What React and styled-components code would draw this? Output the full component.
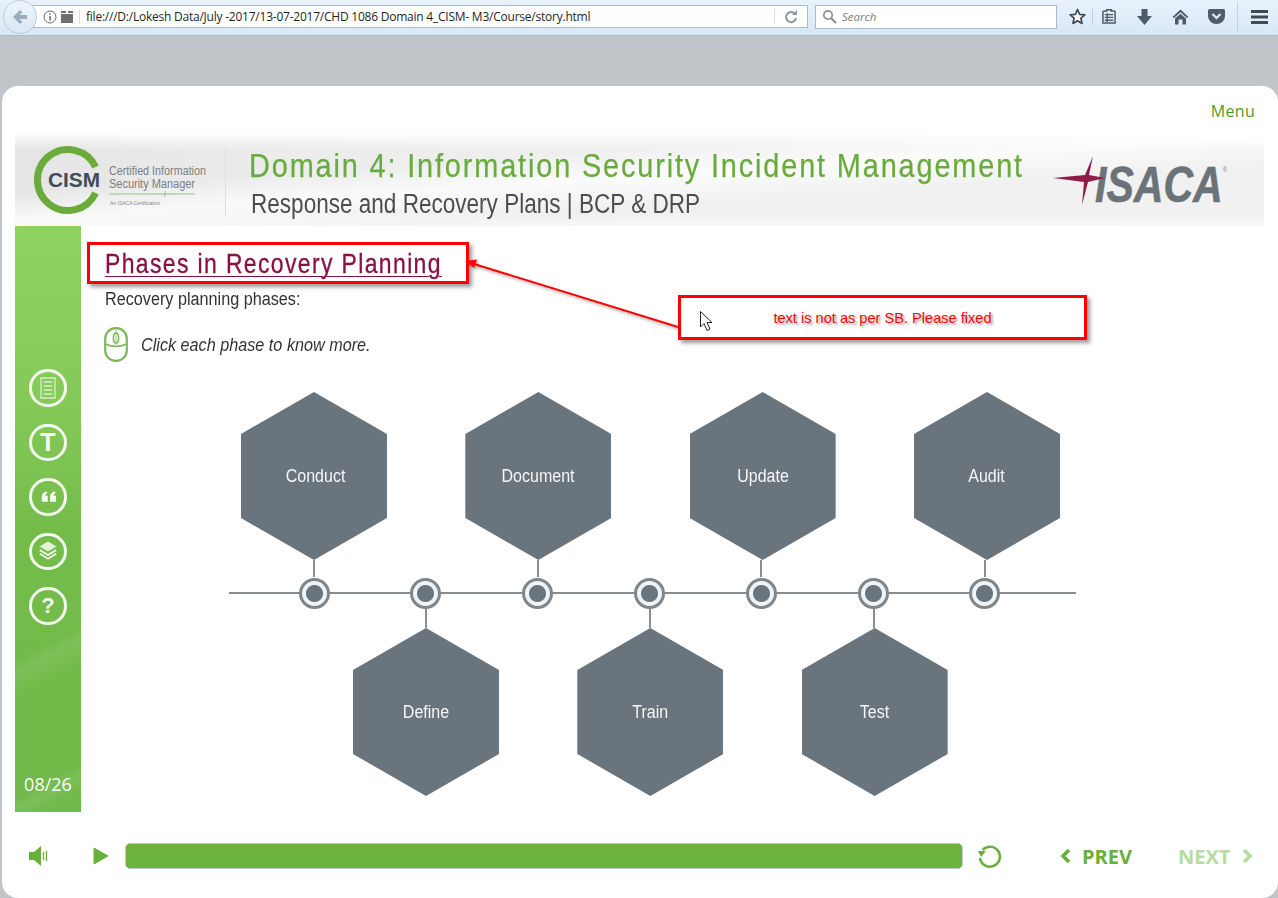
import React from 'react';
import styled, { createGlobalStyle } from 'styled-components';

const GlobalStyle = createGlobalStyle`
  html, body {
    margin: 0;
    padding: 0;
    background: #c0c5c9;
  }
  * {
    box-sizing: border-box;
  }
`;

const sans = '"Liberation Sans", Arial, sans-serif';
const open = '"Open Sans", "Noto Sans", sans-serif';

const Page = styled.div`
  position: relative;
  width: 1278px;
  height: 898px;
  overflow: hidden;
  background: #c0c5c9;
`;

// no condensed face is installed, so narrow headings get squeezed
const Squeeze = styled.span`
  display: inline-block;
  white-space: nowrap;
  transform: scaleX(${p => p.$x});
  transform-origin: ${p => (p.$center ? 'center' : 'left')} center;
`;

/* browser chrome */
const Toolbar = styled.div`
  display: flex;
  align-items: center;
  height: 36px;
  padding: 0 0 2px 3px;
  background: linear-gradient(#e9f2fb, #d8e7f6);
  border-bottom: 1px solid #a9bbcd;
`;

const BackButton = styled.div`
  position: relative;
  z-index: 1;
  display: flex;
  align-items: center;
  justify-content: center;
  flex: none;
  width: 34px;
  height: 34px;
  border-radius: 50%;
  border: 1px solid #bccbda;
  background: linear-gradient(#eef4fa, #dbe7f3);
`;

const UrlBar = styled.div`
  display: flex;
  align-items: center;
  flex: none;
  width: 795px;
  height: 23px;
  margin-left: -24px;
  padding-left: 30px;
  background: #fff;
  border: 1px solid #a9bccf;
  border-left: none;
`;

const UrlDivider = styled.span`
  flex: none;
  width: 1px;
  height: 15px;
  margin: ${p => p.$margin};
  background: #d9dee3;
`;

const UrlText = styled.span`
  flex: none;
  width: 688px;
  font: 12px/20px ${open};
  letter-spacing: -0.23px;
  color: #1f1f1f;
  white-space: nowrap;
`;

const SearchBar = styled.div`
  display: flex;
  align-items: center;
  flex: none;
  gap: 5px;
  width: 242px;
  height: 24px;
  margin-left: 7px;
  padding-left: 6px;
  background: #fff;
  border: 1px solid #a9bccf;
  font: italic 11.5px ${open};
  color: #7d7d7d;
`;

const ToolIcons = styled.div`
  display: flex;
  align-items: center;
  flex: none;
  margin-left: 12px;
`;

const ToolIcon = styled.span`
  display: flex;
  justify-content: center;
  flex: none;
  width: ${p => p.$w || 36}px;
`;

const ToolDivider = styled.span`
  flex: none;
  width: 1px;
  height: ${p => p.$h || 16}px;
  margin-left: ${p => p.$left || 0}px;
  background: #c3d1df;
`;

const GreyGap = styled.div`
  height: 50px;
`;

/* course card */
const Card = styled.div`
  display: flex;
  flex-direction: column;
  height: 812px;
  margin-left: 2px;
  padding: 0 14px 0 13px;
  background: #fff;
  border-radius: 16px;
`;

const MenuRow = styled.div`
  display: flex;
  justify-content: flex-end;
  align-items: center;
  height: 49px;
  padding: 1px 9px 0 0;
`;

const MenuLink = styled.a`
  font: 16px ${open};
  letter-spacing: 0.3px;
  color: #4f9a2c;
`;

const Banner = styled.div`
  display: flex;
  align-items: stretch;
  height: 91px;
  background:
    linear-gradient(176deg, rgba(255, 255, 255, 0) 32%, rgba(255, 255, 255, 0.75) 48%, rgba(255, 255, 255, 0) 66%),
    linear-gradient(rgba(255, 255, 255, 0.8), rgba(255, 255, 255, 0) 16%, rgba(255, 255, 255, 0) 84%, rgba(255, 255, 255, 0.5)),
    linear-gradient(90deg, #e5e5e5, #ececec 22%, #f0f0f0 55%, #f1f1f1 100%);
`;

const BannerLogo = styled.svg`
  flex: none;
  width: 210px;
  height: 91px;
`;

const BannerDivider = styled.span`
  flex: none;
  align-self: center;
  width: 1px;
  height: 70px;
  background: #dedede;
`;

const BannerTitles = styled.div`
  flex: none;
  width: 805px;
  padding: 10px 0 0 23px;
`;

const DomainTitle = styled.div`
  font: 34px/40px ${sans};
  letter-spacing: 2.17px;
  -webkit-text-stroke: 0.25px #69ab3c;
  color: #69ab3c;
`;

const DomainSub = styled.div`
  margin: 3px 0 0 2px;
  font: 27px/33px ${sans};
  color: #4d4d4d;
`;

const IsacaLogo = styled.svg`
  flex: none;
  width: 233px;
  height: 91px;
`;

const Body = styled.div`
  display: flex;
  height: 586px;
`;

const Sidebar = styled.div`
  display: flex;
  flex-direction: column;
  align-items: center;
  flex: none;
  width: 66px;
  padding: 143px 0 15px;
  background:
    linear-gradient(152deg, rgba(255, 255, 255, 0) 70%, rgba(255, 255, 255, 0.08) 72%, rgba(255, 255, 255, 0) 76%),
    linear-gradient(152deg, rgba(255, 255, 255, 0) 92%, rgba(255, 255, 255, 0.08) 94%, rgba(255, 255, 255, 0) 97%),
    linear-gradient(#8ed262 0%, #85ca59 30%, #74bc4a 52%, #70b94a 100%);
`;

const SideIcons = styled.div`
  display: flex;
  flex-direction: column;
  gap: 17px;
`;

const SideButton = styled.div`
  display: flex;
  align-items: center;
  justify-content: center;
  width: 37.5px;
  height: 37.5px;
  border: 3px solid #f4f9f0;
  border-radius: 50%;
  font: bold ${p => p.$size || 20}px ${sans};
  color: #f6fbf3;
`;

const Counter = styled.div`
  margin-top: auto;
  font: 18px/26px ${open};
  color: #fff;
`;

const Main = styled.div`
  flex: 1;
  padding: 22px 0 0 24px;
`;

const Title = styled.h1`
  margin: 0;
  font: 28px/32px ${sans};
  letter-spacing: 1.67px;
  -webkit-text-stroke: 0.3px #8a0f45;
  color: #8a0f45;
`;

const TitleText = styled(Squeeze)`
  text-decoration: underline;
  text-decoration-thickness: 1px;
  text-underline-offset: 3px;
`;

const Lead = styled.p`
  margin: 7px 0 0;
  font: 18px/24px ${sans};
  color: #333;
`;

const Hint = styled.div`
  display: flex;
  align-items: center;
  gap: 13px;
  height: 35px;
  margin: 16px 0 0 -1px;
  font: italic 18px ${sans};
  color: #333;
`;

const HintText = styled.span`
  padding-top: 2px;
`;

const Diagram = styled.div`
  width: 847px;
  margin: 30px 0 0 124px;
`;

const HexRow = styled.div`
  display: flex;
  gap: 78.33px;
  padding-left: ${p => p.$offset}px;
`;

const HexItem = styled.div`
  display: flex;
  flex-direction: ${p => (p.$below ? 'column-reverse' : 'column')};
  align-items: center;
`;

const Hexagon = styled.div`
  display: flex;
  align-items: center;
  justify-content: center;
  width: 146px;
  height: 168px;
  padding-left: ${p => p.$pad || 0}px;
  clip-path: polygon(50% 0, 100% 25%, 100% 75%, 50% 100%, 0 75%, 0 25%);
  background: #6a747c;
  font: 18px ${sans};
  color: #f4f6f7;
`;

const Stem = styled.span`
  width: 2px;
  height: ${p => p.$h}px;
  margin-right: ${p => p.$nudge || 0}px;
  background: #8b9094;
`;

const Timeline = styled.div`
  display: flex;
  align-items: center;
  gap: 80.83px;
  height: 32px;
  padding-left: 69.5px;
  background: linear-gradient(#888c90, #888c90) center / 100% 2px no-repeat;
`;

const Dot = styled.span`
  flex: none;
  width: 31px;
  height: 31px;
  border-radius: 50%;
  border: 3px solid #7f8589;
  background: radial-gradient(circle, #6a747c 0, #6a747c 8px, #eef4f7 9px);
`;

/* player */
const Player = styled.div`
  display: flex;
  align-items: center;
  flex: 1;
  padding: 2px 0 0 14px;
`;

const SpeakerIcon = styled.svg`
  flex: none;
  width: 20px;
  height: 22px;
`;

const PlayIcon = styled.svg`
  flex: none;
  width: 16px;
  height: 18px;
  margin-left: 44px;
`;

const ProgressBar = styled.div`
  flex: none;
  width: 838px;
  height: 26px;
  margin-left: 16px;
  border: 1px solid #c5c5c5;
  border-radius: 5px;
  background: #6bb33c;
`;

const ReplayIcon = styled.svg`
  flex: none;
  width: 25px;
  height: 25px;
  margin-left: 14px;
`;

const NavButton = styled.div`
  display: flex;
  align-items: center;
  gap: ${p => (p.$off ? 12 : 11)}px;
  margin-left: ${p => p.$left}px;
  font: bold 20px ${open};
  color: ${p => (p.$off ? '#b7dca2' : '#69b03b')};
`;

const Chevron = styled.svg`
  flex: none;
  width: 11px;
  height: 14px;
`;

/* review annotations lying on top of the page */
const RedBox = styled.div`
  position: absolute;
  left: ${p => p.$x}px;
  top: ${p => p.$y}px;
  width: ${p => p.$w}px;
  height: ${p => p.$h}px;
  display: flex;
  align-items: center;
  justify-content: center;
  border: 3px solid #f00;
  box-shadow: 3px 3px 4px rgba(0, 0, 0, 0.4);
  font: 14.6px ${sans};
  color: #f00;
  text-shadow: 2px 2px 2px rgba(0, 0, 0, 0.35);
`;

const Overlay = styled.svg`
  position: absolute;
  left: 0;
  top: 0;
  pointer-events: none;
`;

const top = [
  { name: 'Conduct', pad: 4, nudge: 0 },
  { name: 'Document', pad: 0, nudge: 0 },
  { name: 'Update', pad: 0, nudge: 4 },
  { name: 'Audit', pad: 0, nudge: 4 }
];
const bottom = [
  { name: 'Define', nudge: 0 },
  { name: 'Train', nudge: 0 },
  { name: 'Test', nudge: 2 }
];

const iconFill = '#4e5c69';

const App = () => (
  <Page>
    <GlobalStyle />
    <Toolbar>
      <BackButton>
        <svg width="18" height="16" viewBox="0 0 18 16">
          <path d="M9 1 L2 8 L9 15 L11.5 12.5 L8.5 10 H16 V6 H8.5 L11.5 3.5 Z" fill="#9eadbb" />
        </svg>
      </BackButton>
      <UrlBar>
        <svg width="14" height="14" viewBox="0 0 14 14" style={{ flex: 'none' }}>
          <circle cx="7" cy="7" r="6" fill="none" stroke="#5f6a74" />
          <rect x="6.3" y="6" width="1.5" height="4.5" fill="#5f6a74" />
          <rect x="6.3" y="3.3" width="1.5" height="1.5" fill="#5f6a74" />
        </svg>
        <svg width="14" height="12" viewBox="0 0 14 12" style={{ flex: 'none', marginLeft: 3 }}>
          <rect x="1" y="0" width="5" height="2" fill="#6f6f6f" />
          <rect x="8" y="0" width="5" height="2" fill="#6f6f6f" />
          <rect x="1" y="3" width="12" height="9" fill="#6f6f6f" />
        </svg>
        <UrlDivider $margin="0 6px 0 5px" />
        <UrlText>file:///D:/Lokesh Data/July -2017/13-07-2017/CHD 1086 Domain 4_CISM- M3/Course/story.html</UrlText>
        <UrlDivider $margin="0 9px 0 0" />
        <svg width="14" height="14" viewBox="0 0 14 14" style={{ flex: 'none' }}>
          <path d="M11 4 A5 5 0 1 0 12 8" fill="none" stroke="#8d979f" strokeWidth="2" />
          <path d="M8 5 H13 V0 Z" fill="#8d979f" />
        </svg>
      </UrlBar>
      <SearchBar>
        <svg width="15" height="15" viewBox="0 0 15 15">
          <circle cx="6" cy="6" r="4.2" fill="none" stroke="#8f8f8f" strokeWidth="1.7" />
          <path d="M9 9 L14 14" stroke="#8f8f8f" strokeWidth="2.2" />
        </svg>
        Search
      </SearchBar>
      <ToolIcons>
        <ToolIcon $w={17}>
          <svg width="17" height="17" viewBox="0 0 17 17">
            <path d="M8.5 1.5 L10.6 6.3 L15.8 6.8 L11.9 10.2 L13 15.4 L8.5 12.7 L4 15.4 L5.1 10.2 L1.2 6.8 L6.4 6.3 Z" fill="#fff" stroke="#3f4a55" strokeWidth="1.7" strokeLinejoin="round" />
          </svg>
        </ToolIcon>
        <ToolDivider $left={6} />
        <ToolIcon $w={31}>
          <svg width="14" height="15" viewBox="0 0 15 16">
            <path d="M5 2 V0.7 H10 V2 H13 A1 1 0 0 1 14 3 V15 H1 V3 A1 1 0 0 1 2 2 Z" fill="#dfe9f4" stroke={iconFill} strokeWidth="1.6" />
            <path d="M3 6 H12 M3 9 H12 M3 12 H12 M5.5 4.5 V14" stroke={iconFill} strokeWidth="1.4" />
          </svg>
        </ToolIcon>
        <ToolIcon $w={41}>
          <svg width="15" height="16" viewBox="0 0 15 16">
            <path d="M4.5 0 H10.5 V7 H15 L7.5 16 L0 7 H4.5 Z" fill={iconFill} />
          </svg>
        </ToolIcon>
        <ToolIcon $w={31}>
          <svg width="17" height="16" viewBox="0 0 17 16">
            <path d="M8.5 0.5 L16.5 8 L15 9 L8.5 3.3 L2 9 L0.5 8 Z" fill={iconFill} />
            <path d="M8.5 4.8 L14 9.5 V15.5 H10.5 V10.5 H6.5 V15.5 H3 V9.5 Z" fill={iconFill} />
          </svg>
        </ToolIcon>
        <ToolIcon $w={41}>
          <svg width="17" height="15" viewBox="0 0 17 15">
            <path d="M1.5 0 H15.5 A1.5 1.5 0 0 1 17 1.5 V7 A8.5 8 0 0 1 0 7 V1.5 A1.5 1.5 0 0 1 1.5 0 Z" fill={iconFill} />
            <path d="M4.5 5 L8.5 9 L12.5 5" fill="none" stroke="#e2ecf6" strokeWidth="2.2" />
          </svg>
        </ToolIcon>
        <ToolDivider $h={30} />
        <ToolIcon $w={42}>
          <svg width="17" height="14" viewBox="0 0 17 14">
            <path d="M0 0 H17 V3 H0 Z M0 5.5 H17 V8.5 H0 Z M0 11 H17 V14 H0 Z" fill="#3f4a55" />
          </svg>
        </ToolIcon>
      </ToolIcons>
    </Toolbar>
    <GreyGap />
    <Card>
      <MenuRow>
        <MenuLink>Menu</MenuLink>
      </MenuRow>
      <Banner>
        <BannerLogo viewBox="0 0 210 91">
          <path d="M 80.6 32 A 30.5 30.5 0 1 0 80.6 58" fill="none" stroke="#6aab3c" strokeWidth="7" />
          <text x="33" y="52" fontFamily="Liberation Sans" fontWeight="700" fontSize="21" textLength="52" lengthAdjust="spacingAndGlyphs" fill="#3f4c59">CISM</text>
          <text x="94" y="40" fontFamily="Liberation Sans" fontSize="12" textLength="97" lengthAdjust="spacingAndGlyphs" fill="#7a7f83">Certified Information</text>
          <text x="94" y="53" fontFamily="Liberation Sans" fontSize="12" textLength="86" lengthAdjust="spacingAndGlyphs" fill="#7a7f83">Security Manager</text>
          <path d="M94 59 H180 M150 56 V62" stroke="#9dbb8a" strokeWidth="1" />
          <text x="95" y="70" fontFamily="Liberation Sans" fontSize="5" fill="#8a8a8a">An ISACA Certification</text>
        </BannerLogo>
        <BannerDivider />
        <BannerTitles>
          <DomainTitle><Squeeze $x={0.85}>Domain 4: Information Security Incident Management</Squeeze></DomainTitle>
          <DomainSub><Squeeze $x={0.835}>Response and Recovery Plans | BCP &amp; DRP</Squeeze></DomainSub>
        </BannerTitles>
        <IsacaLogo viewBox="0 0 233 91">
          <text x="64" y="67" fontFamily="Liberation Sans" fontWeight="700" fontStyle="italic" fontSize="50" textLength="132" lengthAdjust="spacingAndGlyphs" fill="#6a7378" stroke="#6a7378" strokeWidth="0.6">
            ISACA
            <tspan dy="-30" fontSize="7" fontWeight="400" fontStyle="normal" stroke="none" fill="#888">®</tspan>
          </text>
          <path d="M62 21 L58 40 L74 43 L57 47 L51 70 L53 47 L22 43 L54 40 Z" fill="#8f1c48" />
        </IsacaLogo>
      </Banner>
      <Body>
        <Sidebar>
          <SideIcons>
            <SideButton>
              <svg width="18" height="22" viewBox="0 0 18 22">
                <path d="M2 1 H16 V21 H2 Z M4.5 5 H13.5 M4.5 9 H13.5 M4.5 13 H13.5 M4.5 17 H13.5" fill="none" stroke="#d6efc8" strokeWidth="1.3" />
              </svg>
            </SideButton>
            <SideButton $size={25}>T</SideButton>
            <SideButton>
              <svg width="15" height="11" viewBox="0 0 20 14">
                <path d="M7 0 L8.5 2 C6.5 3.5 6 5 6 6 H9 V14 H1 V7 C1 4 3.5 1.5 7 0 Z M18 0 L19.5 2 C17.5 3.5 17 5 17 6 H20 V14 H12 V7 C12 4 14.5 1.5 18 0 Z" fill="#f6fbf3" />
              </svg>
            </SideButton>
            <SideButton>
              <svg width="20" height="22" viewBox="0 0 22 24">
                <path d="M11 1 L21 7 L11 13 L1 7 Z" fill="#e4f4da" stroke="#7cc052" strokeWidth="1" />
                <path d="M2 11 L11 16.5 L20 11 M2 15 L11 20.5 L20 15" fill="none" stroke="#f0f8ea" strokeWidth="2" />
              </svg>
            </SideButton>
            <SideButton $size={22}>?</SideButton>
          </SideIcons>
          <Counter>08/26</Counter>
        </Sidebar>
        <Main>
          <Title><TitleText $x={0.82}>Phases in Recovery Planning</TitleText></Title>
          <Lead><Squeeze $x={0.9}>Recovery planning phases:</Squeeze></Lead>
          <Hint>
            <svg width="24" height="35" viewBox="0 0 24 35">
              <rect x="1.2" y="1.2" width="21.6" height="32.6" rx="10.5" fill="none" stroke="#7db75a" strokeWidth="2.2" />
              <path d="M1.5 17 C8 20 16 20 22.5 17" fill="none" stroke="#7db75a" strokeWidth="1.6" />
              <path d="M12 2 V18" stroke="#9ac680" strokeWidth="1" />
              <ellipse cx="12" cy="11" rx="2.6" ry="5" fill="none" stroke="#7db75a" strokeWidth="1.6" />
            </svg>
            <HintText><Squeeze $x={0.9}>Click each phase to know more.</Squeeze></HintText>
          </Hint>
          <Diagram>
            <HexRow $offset={12}>
              {top.map(hex => (
                <HexItem key={hex.name}>
                  <Hexagon $pad={hex.pad}><Squeeze $x={0.89} $center>{hex.name}</Squeeze></Hexagon>
                  <Stem $h={17} $nudge={hex.nudge} />
                </HexItem>
              ))}
            </HexRow>
            <Timeline>
              {[0, 1, 2, 3, 4, 5, 6].map(i => (
                <Dot key={i} />
              ))}
            </Timeline>
            <HexRow $offset={124}>
              {bottom.map(hex => (
                <HexItem key={hex.name} $below>
                  <Hexagon><Squeeze $x={0.89} $center>{hex.name}</Squeeze></Hexagon>
                  <Stem $h={19} $nudge={hex.nudge} />
                </HexItem>
              ))}
            </HexRow>
          </Diagram>
        </Main>
      </Body>
      <Player>
        <SpeakerIcon viewBox="0 0 20 22">
          <path d="M0 7 H5 L12 1 V21 L5 15 H0 Z" fill="#69b03b" />
          <path d="M14.5 7 V15 M17.5 6 V16" stroke="#69b03b" strokeWidth="1.3" />
        </SpeakerIcon>
        <PlayIcon viewBox="0 0 16 18">
          <path d="M1 1 L15 9 L1 17 Z" fill="#69b03b" stroke="#69b03b" strokeLinejoin="round" />
        </PlayIcon>
        <ProgressBar />
        <ReplayIcon viewBox="0 0 25 25">
          <path d="M5.5 6 A10 10 0 1 1 3 14" fill="none" stroke="#69b03b" strokeWidth="2.6" />
          <path d="M1 7 H9 L4 13 Z" fill="#69b03b" />
        </ReplayIcon>
        <NavButton $left={58}>
          <Chevron viewBox="0 0 11 14">
            <path d="M9 1 L3 7 L9 13" fill="none" stroke="#69b03b" strokeWidth="3.6" />
          </Chevron>
          PREV
        </NavButton>
        <NavButton $left={46} $off>
          NEXT
          <Chevron viewBox="0 0 11 14">
            <path d="M2 1 L8 7 L2 13" fill="none" stroke="#b7dca2" strokeWidth="3.6" />
          </Chevron>
        </NavButton>
      </Player>
    </Card>
    <RedBox $x={87} $y={242} $w={382} $h={42} />
    <RedBox $x={678} $y={295} $w={409} $h={45}>text is not as per SB. Please fixed</RedBox>
    <Overlay width="1278" height="898" viewBox="0 0 1278 898">
      <defs>
        <filter id="shade" x="-10%" y="-30%" width="120%" height="160%">
          <feDropShadow dx="2" dy="2" stdDeviation="1.5" floodColor="#000" floodOpacity="0.35" />
        </filter>
      </defs>
      <g filter="url(#shade)">
        <path d="M678 327 L474 264" stroke="#f00" strokeWidth="2" />
        <path d="M465 261 L477 259.5 L474 268 Z" fill="#f00" />
      </g>
      <path d="M700.5 311.5 V327 L704 323.5 L707 330.5 L710 329 L707 322.5 L712 322.5 Z" fill="#fff" stroke="#222" strokeWidth="1" />
    </Overlay>
  </Page>
);

export default App;
